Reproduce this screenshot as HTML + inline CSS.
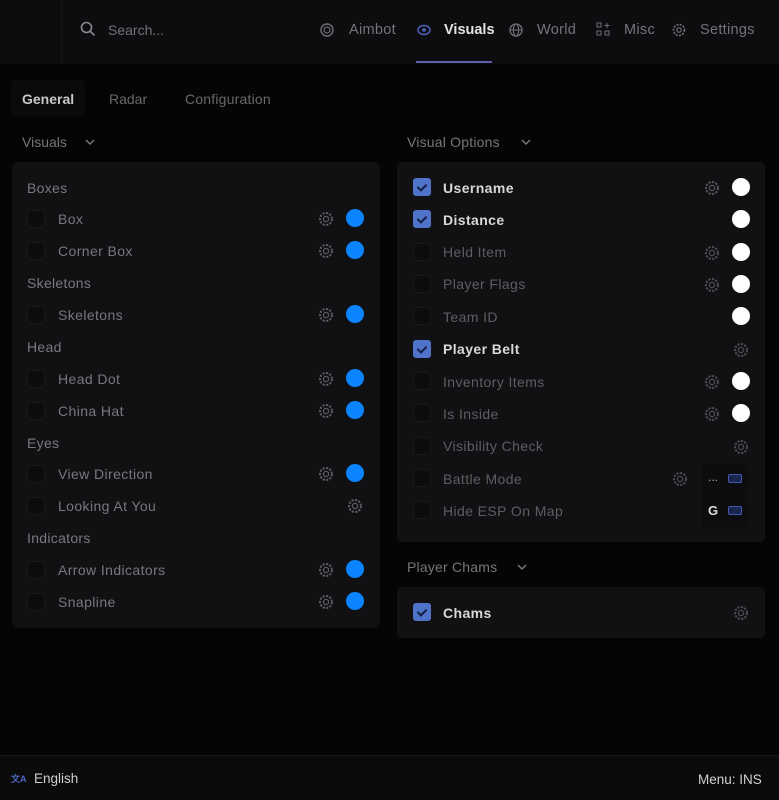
<!DOCTYPE html>
<html><head><meta charset="utf-8"><style>
*{margin:0;padding:0;box-sizing:border-box}
body{width:779px;height:800px;background:#050505;font-family:"Liberation Sans",sans-serif;position:relative;overflow:hidden;color:#888}
.a{position:absolute;white-space:nowrap}
.top{position:absolute;left:0;top:0;width:779px;height:64px;background:#0d0d0f}
.foot{position:absolute;left:0;top:755px;width:779px;height:45px;background:#0b0b0c;border-top:1px solid #161618}
.panel{position:absolute;background:#111113;border-radius:5px}
.cb{position:absolute;width:18px;height:18px;border-radius:3px;background:#0d0d0f;border:1px solid #19191b}
.cb.on{background:#4e73c9;border-color:#4e73c9}
.cb.on:after{content:"";position:absolute;left:5px;top:3px;width:4px;height:7px;border:solid #152048;border-width:0 2px 2px 0;transform:rotate(45deg)}
.lbl{position:absolute;font-size:14px;color:#78787c;letter-spacing:.4px}
.lbl.b{color:#d8d8da;font-weight:bold}
.sec{position:absolute;font-size:14px;color:#7a7a7e;letter-spacing:.3px}
.dot{position:absolute;width:18px;height:18px;border-radius:50%}
.g{position:absolute;width:16px;height:16px}
.kb{position:absolute;width:46px;height:32px;background:#0d0d0f;border-radius:4px}
.nav{font-size:14.5px;color:#747478;letter-spacing:.3px}
</style></head><body>
<div class="top"></div>
<div style="position:absolute;left:61px;top:0;width:1px;height:64px;background:#151517"></div>
<svg class="a" style="left:80px;top:21px" width="16" height="16" viewBox="0 0 16 16"><circle cx="6.5" cy="6.5" r="5" fill="none" stroke="#8a8a8e" stroke-width="1.6"/><path d="M10.5 10.5L14.5 14.5" stroke="#8a8a8e" stroke-width="1.6"/></svg>
<div class="a" style="left:108px;top:22px;font-size:14px;color:#727276">Search...</div>
<svg class="a" style="left:320px;top:23px" width="14" height="14"><circle cx="7" cy="7" r="6" fill="none" stroke="#707074" stroke-width="1.4"/><circle cx="7" cy="7" r="3" fill="none" stroke="#707074" stroke-width="1.2"/></svg>
<div class="a nav" style="left:349px;top:22px">Aimbot</div>
<svg class="a" style="left:417px;top:24px" width="14" height="12"><ellipse cx="7" cy="6" rx="6" ry="4.5" fill="none" stroke="#4e66c4" stroke-width="1.4"/><circle cx="7" cy="6" r="1.8" fill="#4e66c4"/></svg>
<div class="a" style="left:444px;top:22px;font-size:14.5px;color:#e2e2e4;font-weight:bold">Visuals</div>
<div class="a" style="left:416px;top:61px;width:76px;height:2px;background:#5a5fa8"></div>
<svg class="a" style="left:509px;top:23px" width="14" height="14"><circle cx="7" cy="7" r="6" fill="none" stroke="#707074" stroke-width="1.3"/><ellipse cx="7" cy="7" rx="2.6" ry="6" fill="none" stroke="#707074" stroke-width="1.1"/><path d="M1 7h12" stroke="#707074" stroke-width="1.1"/></svg>
<div class="a nav" style="left:537px;top:22px">World</div>
<svg class="a" style="left:596px;top:22px" width="14" height="15"><rect x="1" y="1" width="4" height="4" fill="none" stroke="#707074"/><rect x="1" y="9" width="4" height="4" fill="none" stroke="#707074"/><rect x="9" y="9" width="4" height="4" fill="none" stroke="#707074"/><path d="M11 1v5M8.5 3.5h5" stroke="#707074"/></svg>
<div class="a nav" style="left:624px;top:22px">Misc</div>
<svg class="a" style="left:672px;top:23px" width="14" height="14"><circle cx="7" cy="7" r="5.5" fill="none" stroke="#707074" stroke-width="1.6" stroke-dasharray="2 1.3"/><circle cx="7" cy="7" r="2.2" fill="none" stroke="#707074" stroke-width="1.2"/></svg>
<div class="a nav" style="left:700px;top:22px">Settings</div>

<div class="a" style="left:11px;top:80px;width:74px;height:36px;background:#0a0a0b;border-radius:4px"></div>
<div class="a" style="left:22px;top:91px;font-size:14px;color:#c8c8ca;font-weight:bold">General</div>
<div class="a" style="left:109px;top:91px;font-size:14px;color:#69696d">Radar</div>
<div class="a" style="left:185px;top:91px;font-size:14px;color:#69696d;letter-spacing:.2px">Configuration</div>

<div class="a" style="left:22px;top:134px;font-size:14px;color:#77777b">Visuals</div>
<svg class="a" style="left:84px;top:137px" width="12" height="10"><path d="M2 3l4 4 4-4" fill="none" stroke="#77777b" stroke-width="1.5"/></svg>
<div class="a" style="left:407px;top:134px;font-size:14px;color:#77777b;letter-spacing:.2px">Visual Options</div>
<svg class="a" style="left:520px;top:137px" width="12" height="10"><path d="M2 3l4 4 4-4" fill="none" stroke="#77777b" stroke-width="1.5"/></svg>
<div class="a" style="left:407px;top:559px;font-size:14px;color:#77777b;letter-spacing:.2px">Player Chams</div>
<svg class="a" style="left:516px;top:562px" width="12" height="10"><path d="M2 3l4 4 4-4" fill="none" stroke="#77777b" stroke-width="1.5"/></svg>

<div class="panel" style="left:12px;top:162px;width:368px;height:466px"></div>
<div class="panel" style="left:397px;top:162px;width:368px;height:380px"></div>
<div class="panel" style="left:397px;top:587px;width:368px;height:51px"></div>

<svg width="0" height="0" style="position:absolute"><defs><g id="gear"><circle cx="8" cy="8" r="6" fill="none" stroke="currentColor" stroke-width="2" stroke-dasharray="2.2 1.3"/><circle cx="8" cy="8" r="2.6" fill="none" stroke="currentColor" stroke-width="1.3"/></g></defs></svg>

<!-- left -->
<div class="sec" style="left:27px;top:180px">Boxes</div>
<div class="cb" style="left:27px;top:210px"></div><div class="lbl" style="left:58px;top:211px">Box</div>
<svg class="g" style="left:318px;top:211px;color:#5c5c60"><use href="#gear"/></svg><div class="dot" style="left:346px;top:209px;background:#0a84ff"></div>
<div class="cb" style="left:27px;top:242px"></div><div class="lbl" style="left:58px;top:243px">Corner Box</div>
<svg class="g" style="left:318px;top:243px;color:#5c5c60"><use href="#gear"/></svg><div class="dot" style="left:346px;top:241px;background:#0a84ff"></div>
<div class="sec" style="left:27px;top:275px">Skeletons</div>
<div class="cb" style="left:27px;top:306px"></div><div class="lbl" style="left:58px;top:307px">Skeletons</div>
<svg class="g" style="left:318px;top:307px;color:#5c5c60"><use href="#gear"/></svg><div class="dot" style="left:346px;top:305px;background:#0a84ff"></div>
<div class="sec" style="left:27px;top:339px">Head</div>
<div class="cb" style="left:27px;top:370px"></div><div class="lbl" style="left:58px;top:371px">Head Dot</div>
<svg class="g" style="left:318px;top:371px;color:#5c5c60"><use href="#gear"/></svg><div class="dot" style="left:346px;top:369px;background:#0a84ff"></div>
<div class="cb" style="left:27px;top:402px"></div><div class="lbl" style="left:58px;top:403px">China Hat</div>
<svg class="g" style="left:318px;top:403px;color:#5c5c60"><use href="#gear"/></svg><div class="dot" style="left:346px;top:401px;background:#0a84ff"></div>
<div class="sec" style="left:27px;top:435px">Eyes</div>
<div class="cb" style="left:27px;top:465px"></div><div class="lbl" style="left:58px;top:466px">View Direction</div>
<svg class="g" style="left:318px;top:466px;color:#5c5c60"><use href="#gear"/></svg><div class="dot" style="left:346px;top:464px;background:#0a84ff"></div>
<div class="cb" style="left:27px;top:497px"></div><div class="lbl" style="left:58px;top:498px">Looking At You</div>
<svg class="g" style="left:347px;top:498px;color:#5c5c60"><use href="#gear"/></svg>
<div class="sec" style="left:27px;top:530px">Indicators</div>
<div class="cb" style="left:27px;top:561px"></div><div class="lbl" style="left:58px;top:562px">Arrow Indicators</div>
<svg class="g" style="left:318px;top:562px;color:#5c5c60"><use href="#gear"/></svg><div class="dot" style="left:346px;top:560px;background:#0a84ff"></div>
<div class="cb" style="left:27px;top:593px"></div><div class="lbl" style="left:58px;top:594px">Snapline</div>
<svg class="g" style="left:318px;top:594px;color:#5c5c60"><use href="#gear"/></svg><div class="dot" style="left:346px;top:592px;background:#0a84ff"></div>

<!-- right -->
<div class="cb on" style="left:413px;top:178px"></div><div class="lbl b" style="left:443px;top:180px">Username</div>
<svg class="g" style="left:704px;top:180px;color:#56565a"><use href="#gear"/></svg><div class="dot" style="left:732px;top:178px;background:#fff"></div>
<div class="cb on" style="left:413px;top:210px"></div><div class="lbl b" style="left:443px;top:212px">Distance</div>
<div class="dot" style="left:732px;top:210px;background:#fff"></div>
<div class="cb" style="left:413px;top:243px"></div><div class="lbl" style="left:443px;top:244px;color:#5e5e62">Held Item</div>
<svg class="g" style="left:704px;top:245px;color:#4c4c50"><use href="#gear"/></svg><div class="dot" style="left:732px;top:243px;background:#fff"></div>
<div class="cb" style="left:413px;top:275px"></div><div class="lbl" style="left:443px;top:276px;color:#5e5e62">Player Flags</div>
<svg class="g" style="left:704px;top:277px;color:#4c4c50"><use href="#gear"/></svg><div class="dot" style="left:732px;top:275px;background:#fff"></div>
<div class="cb" style="left:413px;top:307px"></div><div class="lbl" style="left:443px;top:309px;color:#5e5e62">Team ID</div>
<div class="dot" style="left:732px;top:307px;background:#fff"></div>
<div class="cb on" style="left:413px;top:340px"></div><div class="lbl b" style="left:443px;top:341px">Player Belt</div>
<svg class="g" style="left:733px;top:342px;color:#4c4c50"><use href="#gear"/></svg>
<div class="cb" style="left:413px;top:372px"></div><div class="lbl" style="left:443px;top:374px;color:#5e5e62">Inventory Items</div>
<svg class="g" style="left:704px;top:374px;color:#4c4c50"><use href="#gear"/></svg><div class="dot" style="left:732px;top:372px;background:#fff"></div>
<div class="cb" style="left:413px;top:404px"></div><div class="lbl" style="left:443px;top:406px;color:#5e5e62">Is Inside</div>
<svg class="g" style="left:704px;top:406px;color:#4c4c50"><use href="#gear"/></svg><div class="dot" style="left:732px;top:404px;background:#fff"></div>
<div class="cb" style="left:413px;top:437px"></div><div class="lbl" style="left:443px;top:438px;color:#5e5e62">Visibility Check</div>
<svg class="g" style="left:733px;top:439px;color:#4c4c50"><use href="#gear"/></svg>
<div class="cb" style="left:413px;top:469px"></div><div class="lbl" style="left:443px;top:471px;color:#5e5e62">Battle Mode</div>
<svg class="g" style="left:672px;top:471px;color:#4c4c50"><use href="#gear"/></svg>
<div class="kb" style="left:702px;top:463px"></div><div class="a" style="left:708px;top:470px;font-size:12px;color:#aaa">...</div>
<div class="a" style="left:728px;top:474px;width:14px;height:9px;border:1.5px solid #3e5cb0;border-radius:2px;background:#1a2550"></div>
<div class="cb" style="left:413px;top:501px"></div><div class="lbl" style="left:443px;top:503px;color:#5e5e62">Hide ESP On Map</div>
<div class="kb" style="left:702px;top:495px"></div><div class="a" style="left:708px;top:503px;font-size:13px;color:#ddd;font-weight:bold">G</div>
<div class="a" style="left:728px;top:506px;width:14px;height:9px;border:1.5px solid #3e5cb0;border-radius:2px;background:#1a2550"></div>

<div class="cb on" style="left:413px;top:603px"></div><div class="lbl b" style="left:443px;top:605px">Chams</div>
<svg class="g" style="left:733px;top:605px;color:#4c4c50"><use href="#gear"/></svg>

<div class="foot"></div>
<div class="a" style="left:11px;top:772px;font-size:9px;color:#4e66c4;font-weight:bold">文A</div>
<div class="a" style="left:34px;top:771px;font-size:13.5px;color:#d0d0d2">English</div>
<div class="a" style="left:698px;top:772px;font-size:13.5px;color:#d0d0d2">Menu: INS</div>
</body></html>
